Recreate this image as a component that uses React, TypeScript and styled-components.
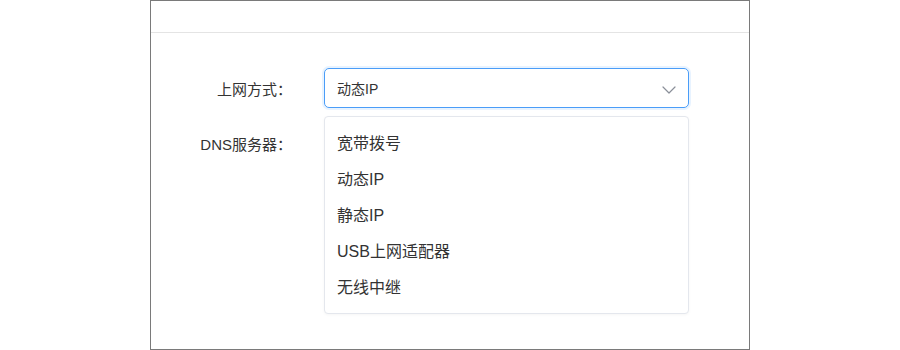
import React from "react";
import styled, { createGlobalStyle } from "styled-components";

const Global = createGlobalStyle`
  html, body { margin: 0; padding: 0; background: #ffffff; }
  body { font-family: "Liberation Sans", "Noto Sans CJK SC", sans-serif; }
  * { box-sizing: border-box; }
`;

const Frame = styled.div`
  width: 600px;
  height: 350px;
  margin: 0 auto;
  border: 1px solid #7a7a7a;
  background: #ffffff;
  display: flex;
  flex-direction: column;
`;

const Header = styled.div`
  height: 32px;
  flex: none;
  border-bottom: 1px solid #e4e4e4;
`;

const Body = styled.div`
  padding: 35px 0 0 21px;
  display: flex;
  flex-direction: column;
  gap: 15px;
`;

const Row = styled.div`
  display: grid;
  grid-template-columns: 120px 365px;
  column-gap: 32px;
  align-items: center;
  height: 40px;
`;

const Label = styled.label`
  text-align: right;
  font-size: 15px;
  color: #333333;
  white-space: nowrap;
`;

const Control = styled.div`
  position: relative;
  height: 40px;
`;

const SelectBox = styled.div`
  height: 40px;
  border: 1px solid #4a9df8;
  border-radius: 5px;
  box-shadow: 0 0 0 2px rgba(64, 158, 255, 0.12);
  display: flex;
  align-items: center;
  justify-content: space-between;
  padding: 0 12px 0 12px;
  font-size: 14px;
  color: #333333;
  background: #fff;
`;

const Input = styled.div`
  height: 40px;
  border: 1px solid #dcdfe6;
  border-radius: 5px;
`;

const Menu = styled.ul`
  position: absolute;
  top: calc(100% + 8px);
  left: 0;
  width: 100%;
  margin: 0;
  padding: 9px 0 7px;
  list-style: none;
  background: #ffffff;
  border: 1px solid #e4e7ed;
  border-radius: 4px;
  box-shadow: 0 1px 3px rgba(0, 0, 0, 0.04);
  z-index: 10;
`;

const Option = styled.li`
  height: 36px;
  line-height: 36px;
  padding-left: 12px;
  font-size: 16px;
  color: #333333;
  white-space: nowrap;
`;

const ChevronIcon = styled.svg`
  margin-top: 3px;
`;

const Chevron = () => (
  <ChevronIcon width="14" height="8" viewBox="0 0 14 8" fill="none">
    <path d="M1 1 L7 7 L13 1" stroke="#8a8f99" strokeWidth="1.2" strokeLinecap="round" strokeLinejoin="round" />
  </ChevronIcon>
);

const options = ["宽带拨号", "动态IP", "静态IP", "USB上网适配器", "无线中继"];

export default function App() {
  return (
    <>
      <Global />
      <Frame>
        <Header />
        <Body>
          <Row>
            <Label>上网方式：</Label>
            <Control>
              <SelectBox>
                <span>动态IP</span>
                <Chevron />
              </SelectBox>
              <Menu>
                {options.map((o) => (
                  <Option key={o}>{o}</Option>
                ))}
              </Menu>
            </Control>
          </Row>
          <Row>
            <Label>DNS服务器：</Label>
            <Control>
              <Input />
            </Control>
          </Row>
        </Body>
      </Frame>
    </>
  );
}
